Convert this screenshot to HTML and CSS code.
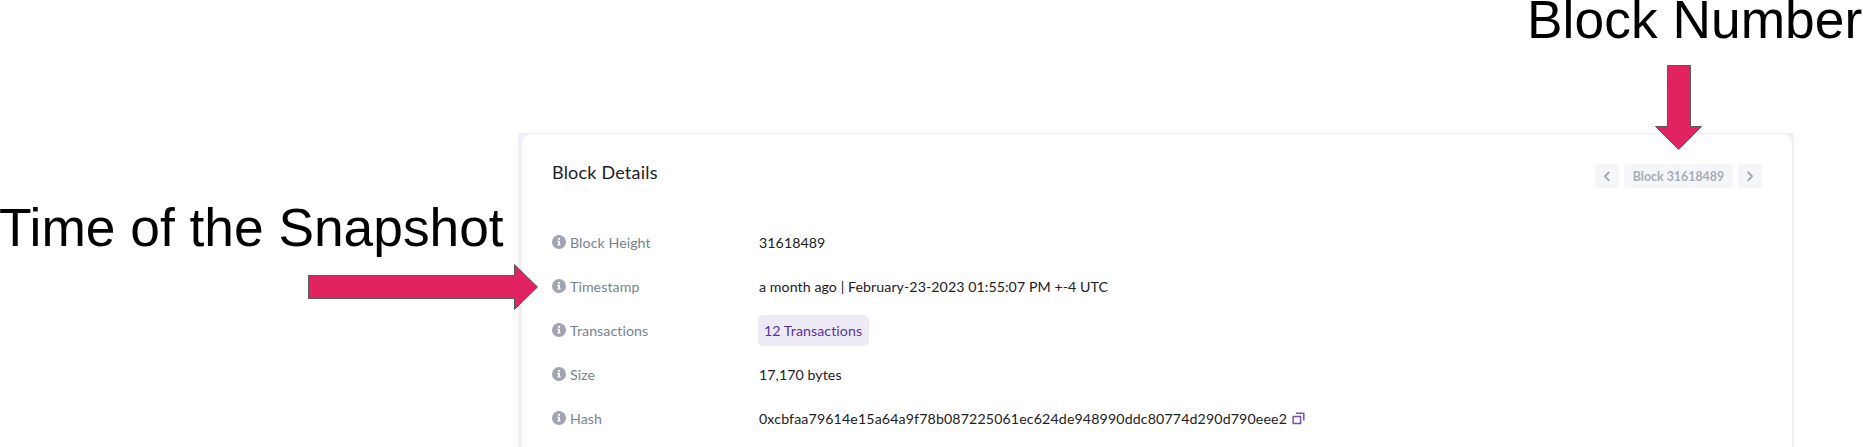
FILE: index.html
```html
<!DOCTYPE html>
<html lang="en">
<head>
<meta charset="utf-8">
<title>Block Details</title>
<link rel="stylesheet" href="styles.css">
</head>
<body>
<svg class="defs" width="0" height="0" aria-hidden="true">
  <symbol id="info" viewBox="0 0 14 14">
    <circle cx="7" cy="7" r="7" fill="#a1a5b3"/>
    <path d="M6 3h2v1.8H6zM5.3 5.8h2.6v3.6h.8v1.2H5.3V9.4H6V7h-.7z" fill="#fff"/>
  </symbol>
</svg>
<main class="page">
  <section class="card">
    <header class="card-head">
      <h1 class="title">Block Details</h1>
      <nav class="pager">
        <a class="pager-btn"><svg width="24" height="24" viewBox="0 0 24 24"><path d="M14.3 7.8 10 12.3 14.3 16.8"/></svg></a>
        <span class="pager-label">Block 31618489</span>
        <a class="pager-btn"><svg width="24" height="24" viewBox="0 0 24 24"><path d="M9.7 7.8 14 12.3 9.7 16.8"/></svg></a>
      </nav>
    </header>
    <dl class="rows">
      <div class="row"><dt><svg class="info"><use href="#info"/></svg>Block Height</dt><dd>31618489</dd></div>
      <div class="row"><dt><svg class="info"><use href="#info"/></svg>Timestamp</dt><dd>a month ago | February-23-2023 01:55:07 PM +-4 UTC</dd></div>
      <div class="row"><dt><svg class="info"><use href="#info"/></svg>Transactions</dt><dd><a class="badge">12 Transactions</a></dd></div>
      <div class="row"><dt><svg class="info"><use href="#info"/></svg>Size</dt><dd>17,170 bytes</dd></div>
      <div class="row"><dt><svg class="info"><use href="#info"/></svg>Hash</dt><dd><span class="hash">0xcbfaa79614e15a64a9f78b087225061ec624de948990ddc80774d290d790eee2</span><svg class="copy" width="13" height="13" viewBox="0 0 13 13"><path d="M1.2 4.4h7.4v7H1.2zM4 1.3h7.8v7.2"/></svg></dd></div>
    </dl>
  </section>
  <div class="note note-time">Time of the Snapshot</div>
  <div class="note note-block">Block Number</div>
  <svg class="arrow arrow-right" width="232" height="50" viewBox="0 0 232 50"><path d="M1.5 13.5H207.5V2.5L230.5 25 207.5 47.5V36.5H1.5z"/></svg>
  <svg class="arrow arrow-down" width="50" height="88" viewBox="0 0 50 88"><path d="M13.5 1.5H36.5V62.5H47.5L24.7 85.5 1.5 62.5H13.5z"/></svg>
</main>
</body>
</html>
```
FILE: styles.css
```css
body { margin: 0; background: #fff; font-family: Lato, sans-serif; font-variant-ligatures: none; }
.defs { position: absolute; }
.page {
  position: relative;
  box-sizing: border-box;
  width: 1863px;
  height: 447px;
  padding: 133px 69px 0 518px;
  overflow: hidden;
}
.page::before {
  content: "";
  position: absolute;
  left: 518px;
  right: 69px;
  top: 133px;
  bottom: 0;
  background: #f0eff7;
}
.card {
  position: relative;
  box-sizing: border-box;
  height: 330px;
  margin: 1px 2px 0 4px;
  padding: 30px 30px 0;
  border-radius: 10px;
  background: #fff;
}
.card-head { display: flex; justify-content: space-between; height: 56px; }
.title { margin: -4px 0 0; font-size: 18px; line-height: 24px; font-weight: 400; color: #1e2022; letter-spacing: 0.2px; }
.pager { display: flex; gap: 5px; height: 24px; }
.pager-btn, .pager-label {
  display: flex;
  align-items: center;
  justify-content: center;
  height: 24px;
  border-radius: 2px;
  background: #f5f6fa;
}
.pager-btn { width: 24px; }
.pager-btn path { fill: none; stroke: #a1a5b3; stroke-width: 1.9; }
.pager-label { width: 109px; font-size: 12.4px; font-weight: 700; color: #a8acb9; }
.rows { margin: 0; }
.row { display: flex; align-items: center; height: 44px; font-size: 14.2px; letter-spacing: 0.07px; white-space: nowrap; }
dt { display: flex; align-items: center; gap: 4px; width: 207px; color: #77838f; }
dd { display: flex; align-items: center; margin: 0; color: #1e2022; }
.info { width: 14px; height: 14px; }
.hash { letter-spacing: 0.13px; }
.badge {
  display: flex;
  align-items: center;
  box-sizing: border-box;
  width: 111px;
  height: 31px;
  margin-left: -1px;
  padding-left: 6px;
  border-radius: 5px;
  background: #eeeaf5;
  color: #5a32a3;
}
.copy { margin-left: 5px; fill: none; stroke: #7551b5; stroke-width: 1.5; }
.note {
  position: absolute;
  font-family: "Liberation Sans", Arial, sans-serif;
  font-size: 53.3px;
  line-height: 60px;
  white-space: nowrap;
  color: #000;
}
.note-time { left: -1px; top: 198px; }
.note-block { left: 1527px; top: -10px; letter-spacing: 0.05px; }
.arrow { position: absolute; fill: #e1235f; stroke: #595959; stroke-width: 1; }
.arrow-right { left: 307px; top: 262px; }
.arrow-down { left: 1654px; top: 64px; }
```
